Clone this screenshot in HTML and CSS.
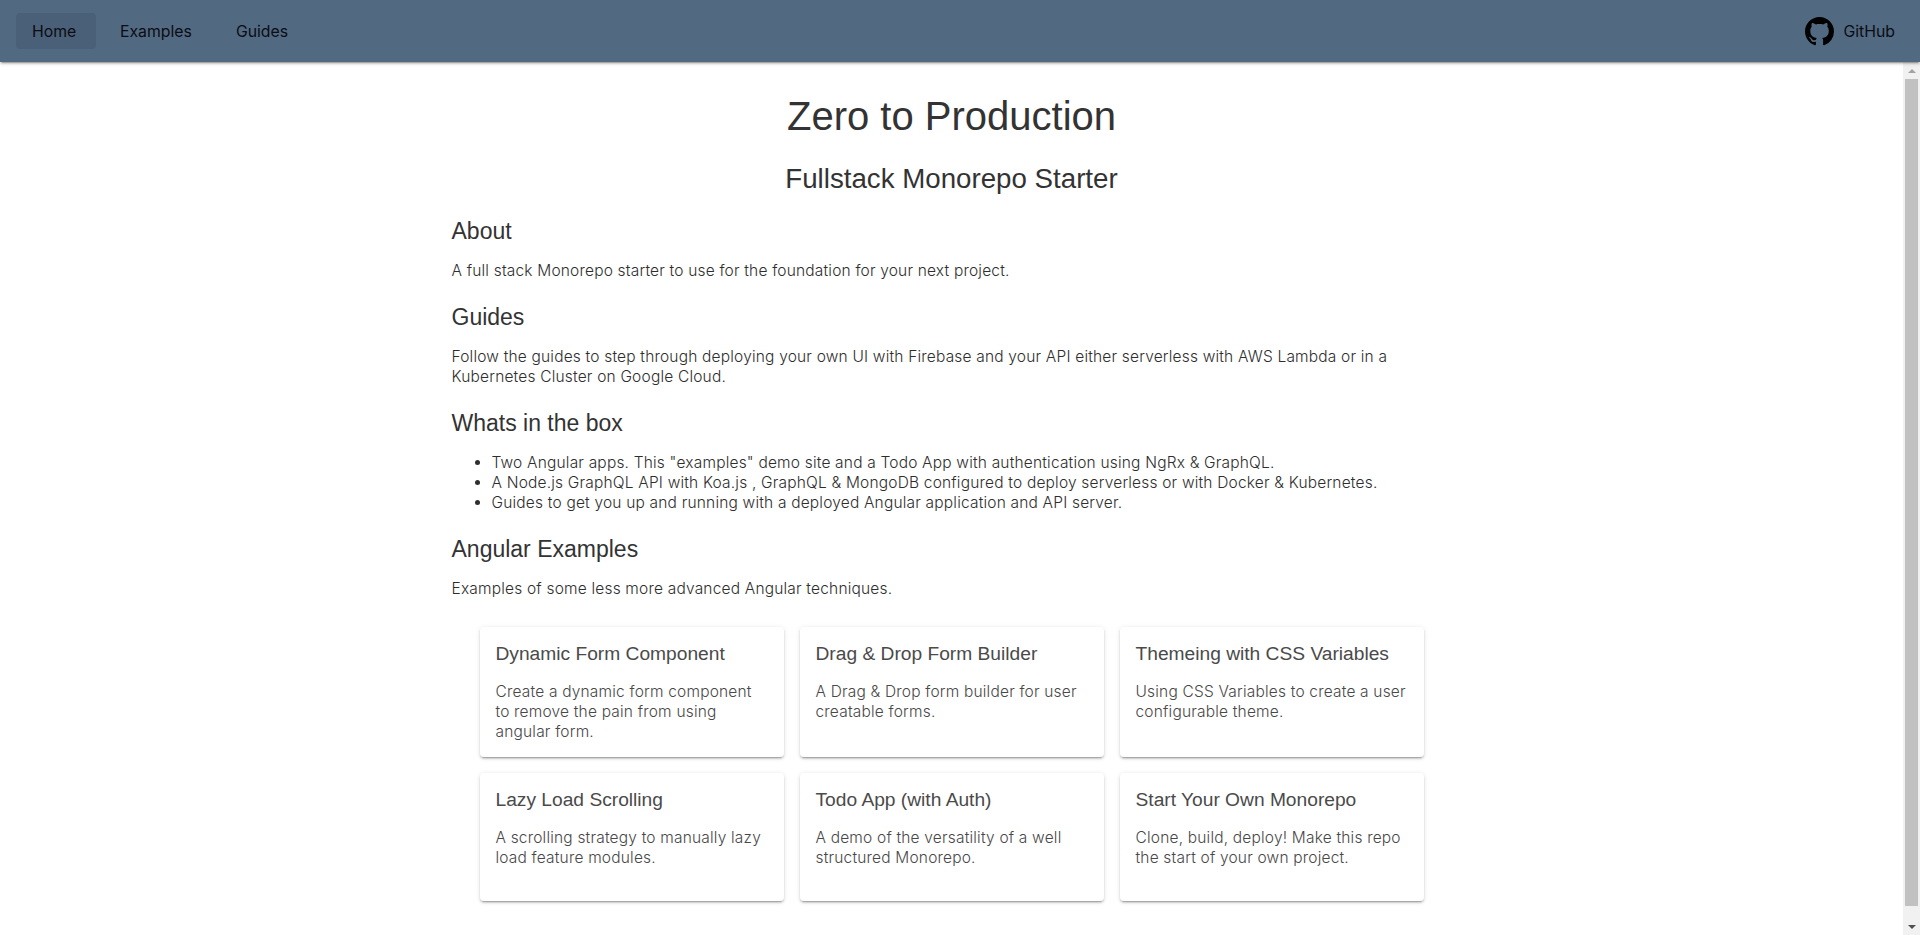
FILE: index.html
```html
<!DOCTYPE html>
<html lang="en">
<head>
<meta charset="utf-8">
<title>Zero to Production</title>
<link rel="stylesheet" href="styles.css">
</head>
<body>
<header class="topbar">
  <nav class="nav">
    <a class="nav-link nav-home is-active">Home</a>
    <a class="nav-link nav-examples">Examples</a>
    <a class="nav-link nav-guides">Guides</a>
  </nav>
  <a class="github">
    <svg class="github-icon" viewBox="0 0 16 16" aria-hidden="true"><path fill-rule="evenodd" d="M8 0C3.58 0 0 3.58 0 8c0 3.54 2.29 6.53 5.47 7.59.4.07.55-.17.55-.38 0-.19-.01-.82-.01-1.49-2.01.37-2.53-.49-2.69-.94-.09-.23-.48-.94-.82-1.13-.28-.15-.68-.52-.01-.53.63-.01 1.08.58 1.23.82.72 1.21 1.87.87 2.33.66.07-.52.28-.87.51-1.07-1.78-.2-3.64-.89-3.64-3.95 0-.87.31-1.59.82-2.15-.08-.2-.36-1.02.08-2.12 0 0 .67-.21 2.2.82.64-.18 1.32-.27 2-.27.68 0 1.36.09 2 .27 1.53-1.04 2.2-.82 2.2-.82.44 1.1.16 1.92.08 2.12.51.56.82 1.27.82 2.15 0 3.07-1.87 3.75-3.65 3.95.29.25.54.73.54 1.48 0 1.07-.01 1.93-.01 2.2 0 .21.15.46.55.38A8.013 8.013 0 0016 8c0-4.42-3.58-8-8-8z"/></svg>
    <span class="github-text">GitHub</span>
  </a>
</header>
<div class="page">
<main class="scroller">
  <div class="content">
    <h1>Zero to Production</h1>
    <h2>Fullstack Monorepo Starter</h2>
    <h3>About</h3>
    <p>A full stack Monorepo starter to use for the foundation for your next project.</p>
    <h3>Guides</h3>
    <p>Follow the guides to step through deploying your own UI with Firebase and your API either serverless with AWS Lambda or in a Kubernetes Cluster on Google Cloud.</p>
    <h3>Whats in the box</h3>
    <ul>
      <li>Two Angular apps. This "examples" demo site and a Todo App with authentication using NgRx &amp; GraphQL.</li>
      <li>A Node.js GraphQL API with Koa.js , GraphQL &amp; MongoDB configured to deploy serverless or with Docker &amp; Kubernetes.</li>
      <li>Guides to get you up and running with a deployed Angular application and API server.</li>
    </ul>
    <h3>Angular Examples</h3>
    <p>Examples of some less more advanced Angular techniques.</p>
    <div class="cards">
      <article class="card"><h4>Dynamic Form Component</h4><p>Create a dynamic form component to remove the pain from using angular form.</p></article>
      <article class="card"><h4>Drag &amp; Drop Form Builder</h4><p>A Drag &amp; Drop form builder for user creatable forms.</p></article>
      <article class="card"><h4>Themeing with CSS Variables</h4><p>Using CSS Variables to create a user configurable theme.</p></article>
      <article class="card"><h4>Lazy Load Scrolling</h4><p>A scrolling strategy to manually lazy load feature modules.</p></article>
      <article class="card"><h4>Todo App (with Auth)</h4><p>A demo of the versatility of a well structured Monorepo.</p></article>
      <article class="card"><h4>Start Your Own Monorepo</h4><p>Clone, build, deploy! Make this repo the start of your own project.</p></article>
    </div>
  </div>
</main>
<aside class="scrollbar" aria-hidden="true">
  <div class="sb-btn"><span class="sb-arrow sb-up"></span></div>
  <div class="sb-track"><div class="sb-thumb"></div></div>
  <div class="sb-btn"><span class="sb-arrow sb-down"></span></div>
</aside>
</div>
</body>
</html>
```
FILE: styles.css
```css
* { box-sizing: border-box; }
html, body { height: 100%; margin: 0; }
body {
  display: flex;
  flex-direction: column;
  overflow: hidden;
  background: #fff;
  color: #2e2e2e;
  font-family: "Inter", sans-serif;
  font-weight: 300;
  font-size: 15.5px;
  letter-spacing: .19px;
  line-height: 20px;
}
.topbar {
  position: relative;
  z-index: 2;
  flex: 0 0 62px;
  display: flex;
  align-items: center;
  justify-content: space-between;
  padding: 0 16px;
  background: #516a82;
  box-shadow: 0 3px 1px -2px rgba(0,0,0,.2), 0 2px 2px 0 rgba(0,0,0,.14), 0 1px 5px 0 rgba(0,0,0,.12);
  color: #0c0c14;
}
.nav { display: flex; gap: 8px; }
.nav-link {
  display: block;
  height: 36px;
  line-height: 38px;
  padding: 0 16px;
  border-radius: 4px;
  font-size: 15.8px;
  font-weight: 400;
  letter-spacing: 0;
  color: #0c0c14;
}
.nav-home { width: 80px; }
.nav-examples { padding-right: 20px; }
.is-active { background: #4a6078; }
.github { display: flex; align-items: center; gap: 9px; padding-right: 9px; font-size: 15.8px; font-weight: 400; letter-spacing: 0; }
.github-text { padding-top: 2px; }
.github-icon { width: 29px; height: 29px; display: block; fill: #000; }
.page { flex: 1 1 0; min-height: 0; display: flex; }
.scroller { flex: 1 1 0; min-width: 0; overflow: hidden; }
.scrollbar { flex: 0 0 17px; display: flex; flex-direction: column; background: #f1f1f1; }
.sb-btn { flex: 0 0 17px; display: flex; align-items: center; justify-content: center; }
.sb-track { flex: 1 1 0; padding: 0 2px 12px; display: flex; }
.sb-thumb { flex: 1; background: #c1c1c1; }
.sb-arrow { width: 0; height: 0; border-left: 4px solid transparent; border-right: 4px solid transparent; }
.sb-up { border-bottom: 4px solid #a3a3a3; }
.sb-down { border-top: 4px solid #505050; }
.content {
  width: 1000px;
  margin: 0 auto;
}
h1, h2, h3, h4 { font-family: "Liberation Sans", Arial, sans-serif; font-weight: 400; letter-spacing: 0; }
h1 { margin: 0; padding-top: 30px; font-size: 40px; line-height: 48px; text-align: center; color: #333; }
h2 { margin: 23px 0 0; font-size: 27.7px; line-height: 32px; text-align: center; color: #333; }
h3 { margin: 22px 0 0; font-size: 23px; line-height: 28px; color: #333; }
.content > p { margin: 16px 0 0; }
ul { margin: 16px 0 0; padding-left: 40px; }
.cards {
  display: grid;
  grid-template-columns: repeat(3, 304px);
  grid-template-rows: 130px 128px;
  gap: 16px;
  justify-content: center;
  margin-top: 28px;
}
.card {
  padding: 16px;
  border-radius: 4px;
  background: #fff;
  box-shadow: 0 3px 1px -2px rgba(0,0,0,.2), 0 2px 2px 0 rgba(0,0,0,.14), 0 1px 5px 0 rgba(0,0,0,.12);
}
h4 { margin: 0 0 17px; font-size: 19.2px; line-height: 22px; color: #4a4a4a; }
.card p { margin: 0; color: #484848; }
```
